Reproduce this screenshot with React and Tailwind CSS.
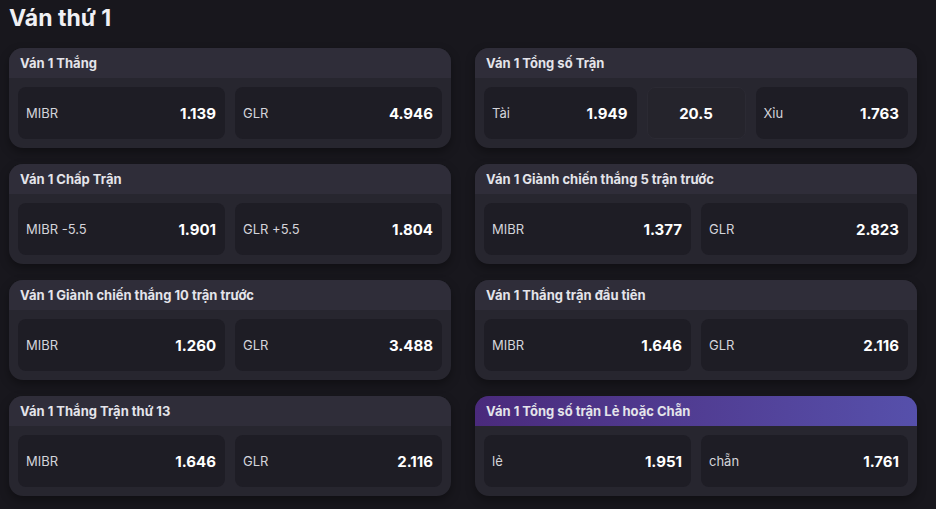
import React from "react";

const markets = [
  { title: "Ván 1 Thắng", odds: [["MIBR", "1.139"], ["GLR", "4.946"]] },
  { title: "Ván 1 Tổng số Trận", total: true, odds: [["Tài", "1.949"], ["Xỉu", "1.763"]], line: "20.5" },
  { title: "Ván 1 Chấp Trận", odds: [["MIBR -5.5", "1.901"], ["GLR +5.5", "1.804"]] },
  { title: "Ván 1 Giành chiến thắng 5 trận trước", odds: [["MIBR", "1.377"], ["GLR", "2.823"]] },
  { title: "Ván 1 Giành chiến thắng 10 trận trước", odds: [["MIBR", "1.260"], ["GLR", "3.488"]] },
  { title: "Ván 1 Thắng trận đầu tiên", odds: [["MIBR", "1.646"], ["GLR", "2.116"]] },
  { title: "Ván 1 Thắng Trận thứ 13", odds: [["MIBR", "1.646"], ["GLR", "2.116"]] },
  { title: "Ván 1 Tổng số trận Lẻ hoặc Chẵn", active: true, odds: [["lẻ", "1.951"], ["chẵn", "1.761"]] },
];

function OddCell({ label, value }) {
  return (
    <div className="flex-1 h-[52px] rounded-lg bg-[#1e1d25] flex items-center justify-between pl-2 pr-[9px] pt-[2px]">
      <span className="text-[13px] text-[#d4d4da]">{label}</span>
      <span className="text-[15px] font-bold text-white">{value}</span>
    </div>
  );
}

function MarketCard({ market }) {
  return (
    <div className="rounded-[14px] overflow-hidden bg-[#27262f] shadow-[0_4px_10px_rgba(0,0,0,0.35)]">
      <div
        className={`h-[30px] flex items-center px-[11px] pt-[2px] text-[13px] font-bold text-[#e4e4ea] ${
          market.active
            ? "bg-gradient-to-r from-[#4a2a7c] to-[#5650ab]"
            : "bg-[#2f2d39]"
        }`}
      >
        {market.title}
      </div>
      <div className="flex gap-[10px] p-[9px]">
        {market.total ? (
          <>
            <OddCell label={market.odds[0][0]} value={market.odds[0][1]} />
            <div className="w-[99px] h-[52px] rounded-lg bg-[#25242c] border border-[#2b2a33] flex items-center justify-center pt-[2px] text-[15px] font-bold text-white">
              {market.line}
            </div>
            <OddCell label={market.odds[1][0]} value={market.odds[1][1]} />
          </>
        ) : (
          market.odds.map(([label, value]) => (
            <OddCell key={label} label={label} value={value} />
          ))
        )}
      </div>
    </div>
  );
}

export default function App() {
  return (
    <div
      className="w-[936px] h-[509px] bg-[#18171d] pl-[9px] pr-[19px] overflow-hidden"
      style={{ fontFamily: "Inter, 'Noto Sans', sans-serif" }}
    >
      <h1 className="text-[23px] font-bold text-[#f0f0f4] h-[48px] pt-[2px] leading-[32px]">
        Ván thứ 1
      </h1>
      <div className="grid grid-cols-2 gap-x-6 gap-y-4">
        {markets.map((m) => (
          <MarketCard key={m.title} market={m} />
        ))}
      </div>
    </div>
  );
}
